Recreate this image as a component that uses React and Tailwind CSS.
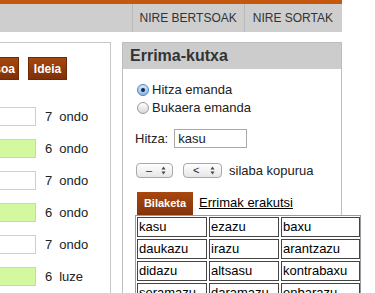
import { useState } from 'react';

const ROWS = [
  { n: 7, label: 'ondo', green: false },
  { n: 6, label: 'ondo', green: true },
  { n: 7, label: 'ondo', green: false },
  { n: 6, label: 'ondo', green: true },
  { n: 7, label: 'ondo', green: false },
  { n: 6, label: 'luze', green: true },
];

const WORDS = [
  'kasu', 'ezazu', 'baxu',
  'daukazu', 'irazu', 'arantzazu',
  'didazu', 'altsasu', 'kontrabaxu',
  'seramazu', 'daramazu', 'enbarazu',
];

function Radio({ checked, label, onClick }) {
  return (
    <label className="flex items-center h-[18px] cursor-pointer" onClick={onClick}>
      <span
        className={
          'ml-[2px] w-[12px] h-[12px] rounded-full border flex items-center justify-center ' +
          (checked
            ? 'border-[#4a7fc1] bg-gradient-to-b from-[#d6e8fb] to-[#8db8ec]'
            : 'border-[#9a9a9a] bg-gradient-to-b from-[#ffffff] to-[#d8d8d8]')
        }
      >
        {checked && <span className="w-[4px] h-[4px] rounded-full bg-[#1b2a3c]" />}
      </span>
      <span className="ml-[3px] text-[13px] text-[#222]">{label}</span>
    </label>
  );
}

function Stepper({ value, width }) {
  return (
    <div
      className={
        width +
        ' h-[15px] rounded-[4px] border border-[#a8a8a8] bg-gradient-to-b from-white to-[#e6e6e6] flex items-center justify-between pl-[9px] pr-[6px]'
      }
    >
      <span className="text-[11px] leading-none text-[#222]">{value}</span>
      <svg width="5" height="9" viewBox="0 0 5 9">
        <path d="M2.5 0.5 L4.5 3.5 L0.5 3.5 Z" fill="#444" />
        <path d="M2.5 8.5 L4.5 5.5 L0.5 5.5 Z" fill="#444" />
      </svg>
    </div>
  );
}

export default function App() {
  const [mode, setMode] = useState('hitza');
  const [word, setWord] = useState('kasu');

  return (
    <div className="w-[375px] h-[293px] overflow-hidden bg-white font-['Liberation_Sans',Arial,sans-serif]">
      <div className="h-[4px] w-[342px] bg-[#c5580f]" />
      <nav className="h-[28px] w-[342px] bg-[#cecece] flex justify-end text-[12px] text-[#333]">
        <a className="h-full flex items-center border-l border-[#b9b9b9] pl-[7px] pr-[7px]">NIRE BERTSOAK</a>
        <a className="h-full flex items-center border-l border-[#b9b9b9] pl-[8px] pr-[9px]">NIRE SORTAK</a>
      </nav>

      <div className="flex mt-[10px] gap-[11px]">
        <div className="w-[111px] h-[251px] border-t border-r border-[#c6c6c6] overflow-hidden">
          <div className="flex gap-[9px] mt-[14px]">
            <button className="w-[50px] -ml-[31px] h-[23px] text-right pr-[3px] text-[12px] font-bold text-white bg-gradient-to-b from-[#a5470f] to-[#7f3008] border border-[#6e2a06]">
              Bertsoa
            </button>
            <button className="w-[39px] h-[23px] text-[12px] font-bold text-white bg-gradient-to-b from-[#a5470f] to-[#7f3008] border border-[#6e2a06]">
              Ideia
            </button>
          </div>
          <div className="mt-[27px] flex flex-col gap-[13px]">
            {ROWS.map((r, i) => (
              <div key={i} className="flex items-center h-[19px]">
                <div
                  className={
                    '-ml-[24px] w-[60px] h-[19px] border border-[#cfcfcf] ' +
                    (r.green ? 'bg-[#d3f8a0]' : 'bg-white')
                  }
                />
                <span className="ml-[9px] text-[13px] text-[#222]">{r.n}</span>
                <span className="ml-[7px] text-[13px] text-[#222]">{r.label}</span>
              </div>
            ))}
          </div>
        </div>

        <div className="w-[220px] h-[251px] border-t border-l border-r border-[#bdbdbd]">
          <div className="h-[26px] bg-[#cccccc] pl-[7px] flex items-center text-[16px] font-bold text-[#333]">
            Errima-kutxa
          </div>
          <div className="pl-[12px] pt-[12px]">
            <Radio checked={mode === 'hitza'} label="Hitza emanda" onClick={() => setMode('hitza')} />
            <Radio checked={mode === 'bukaera'} label="Bukaera emanda" onClick={() => setMode('bukaera')} />

            <div className="flex items-center mt-[12px] h-[19px]">
              <span className="text-[13px] text-[#222]">Hitza:</span>
              <input
                value={word}
                onChange={(e) => setWord(e.target.value)}
                className="ml-[6px] w-[73px] h-[19px] border border-[#a9a9a9] px-[3px] text-[13px] text-[#222] outline-none"
              />
            </div>

            <div className="flex items-center mt-[15px] h-[15px]">
              <div className="ml-[1px]">
                <Stepper value="–" width="w-[37px]" />
              </div>
              <div className="ml-[10px]">
                <Stepper value="<" width="w-[39px]" />
              </div>
              <span className="ml-[7px] text-[13px] text-[#222]">silaba kopurua</span>
            </div>

            <div className="flex items-end mt-[14px]">
              <div className="ml-[2px] w-[56px] h-[23px] flex items-center justify-center bg-gradient-to-b from-[#a8480f] to-[#84340a] text-[11px] font-bold text-white">
                Bilaketa
              </div>
              <a className="ml-[6px] mb-[3px] text-[13px] text-black underline">Errimak erakutsi</a>
            </div>

            <div className="w-[226px] border border-[#9a9a9a] p-[1px] grid grid-cols-[70px_70px_79px] gap-[2px] bg-white">
              {WORDS.map((w) => (
                <div key={w} className="h-[20px] border border-[#444] pl-[1px] flex items-center text-[13px] text-black">
                  {w}
                </div>
              ))}
            </div>
          </div>
        </div>
      </div>
    </div>
  );
}
